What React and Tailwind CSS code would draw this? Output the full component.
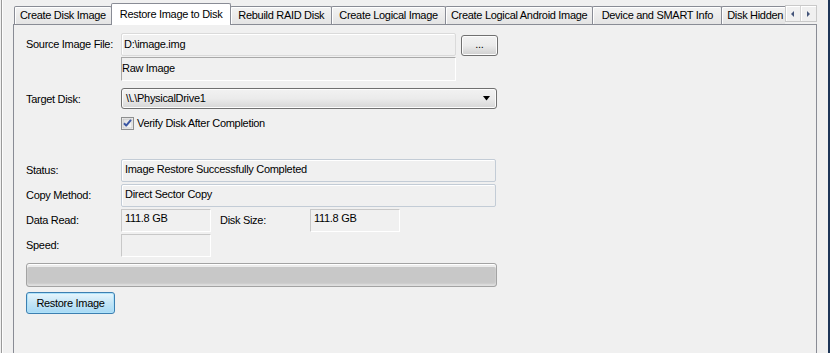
import React from 'react';

const tabs = [
  { label: 'Create Disk Image', w: 'w-[98px]' },
  { label: 'Restore Image to Disk', w: 'w-[121px]', active: true },
  { label: 'Rebuild RAID Disk', w: 'w-[102px]' },
  { label: 'Create Logical Image', w: 'w-[115px]' },
  { label: 'Create Logical Android Image', w: 'w-[149px]' },
  { label: 'Device and SMART Info', w: 'w-[130px]' },
];

function Tab({ label, w, active }) {
  if (active) {
    return (
      <div className={`${w} -ml-[1px] relative z-10 h-[22px] -mb-[1px] flex items-start justify-center pt-[4px] border border-b-0 border-[#898c95] rounded-t-[2px] bg-white whitespace-nowrap`}>
        {label}
      </div>
    );
  }
  return (
    <div className={`${w} -ml-[1px] first:ml-0 h-[18px] flex items-center justify-center border border-b-0 border-[#898c95] rounded-t-[2px] bg-gradient-to-b from-[#f3f3f3] to-[#e4e4e4] shadow-[inset_1px_1px_0_#ffffff] whitespace-nowrap`}>
      {label}
    </div>
  );
}

function Label({ children, className = '' }) {
  return <div className={`w-[95px] shrink-0 pt-[5px] ${className}`}>{children}</div>;
}

function InfoBox({ children, className = '' }) {
  return (
    <div className={`h-[23px] border border-[#c3ccd6] rounded-[2px] shadow-[inset_1px_1px_0_#ffffff] px-[3px] pt-[3px] whitespace-nowrap ${className}`}>
      {children}
    </div>
  );
}

function SunkenBox({ children, className = '' }) {
  return (
    <div className={`h-[23px] border border-t-[#c8c8c8] border-l-[#c8c8c8] border-r-white border-b-white px-[3px] pt-[2px] whitespace-nowrap ${className}`}>
      {children}
    </div>
  );
}

function Checkbox() {
  return (
    <svg width="13" height="13" viewBox="0 0 13 13" className="shrink-0">
      <defs>
        <linearGradient id="cb" x1="0" y1="0" x2="1" y2="1">
          <stop offset="0" stopColor="#dcdcdc" />
          <stop offset="1" stopColor="#fbfbfb" />
        </linearGradient>
      </defs>
      <rect x="0.5" y="0.5" width="12" height="12" fill="#f4f4f4" stroke="#8e8f8f" />
      <rect x="2" y="2" width="9" height="9" fill="url(#cb)" stroke="#b8b8b8" strokeWidth="0.6" />
      <path d="M3 6.2 L5.2 8.6 L10 2.8" fill="none" stroke="#3b57a3" strokeWidth="2" strokeLinejoin="round" />
    </svg>
  );
}

export default function App() {
  return (
    <div className="w-[830px] h-[353px] overflow-hidden bg-[#f0f0f0] flex font-['Liberation_Sans',Arial,sans-serif] text-[11px] tracking-[-0.3px] text-black leading-[13px]">
      {/* left window edge */}
      <div className="w-[13px] shrink-0 pl-[1px]">
        <div className="h-full w-[2px] border-l border-[#9a9a9a] border-r border-r-[#fdfdfd]" />
      </div>

      {/* tab control */}
      <div className="w-[804px] shrink-0 flex flex-col">
        <div className="h-[24px] flex items-end pl-[1px]">
          {tabs.map((t) => (
            <Tab key={t.label} {...t} />
          ))}
          <div className="w-[64px] -ml-[1px] h-[18px] flex items-center pl-[5px] border border-b-0 border-r-0 border-[#898c95] rounded-tl-[2px] bg-gradient-to-b from-[#f3f3f3] to-[#e4e4e4] shadow-[inset_1px_1px_0_#ffffff] whitespace-nowrap overflow-hidden">
            Disk Hidden Areas
          </div>
          <div className="self-start mt-[5px] flex h-[17px] border border-[#c9c9c9] bg-[#f0f0f0]">
            <div className="w-[15px] flex items-center justify-center border-r border-[#d4d4d4] shadow-[inset_1px_1px_0_#ffffff]">
              <div className="w-0 h-0 border-y-[3px] border-y-transparent border-r-[3px] border-r-[#44557a]" />
            </div>
            <div className="w-[15px] flex items-center justify-center shadow-[inset_1px_1px_0_#ffffff]">
              <div className="w-0 h-0 border-y-[3px] border-y-transparent border-l-[3px] border-l-[#44557a]" />
            </div>
          </div>
        </div>

        <div className="flex-1 border border-b-0 border-[#898c95] bg-[#f0f0f0] pl-[12px] pt-[8px]">
          {/* source image */}
          <div className="flex">
            <Label>Source Image File:</Label>
            <div className="flex flex-col gap-[1px]">
              <div className="w-[335px] h-[23px] border border-[#dadada] rounded-[2px] shadow-[inset_1px_1px_0_#ffffff] px-[2px] pt-[4px]">
                D:\image.img
              </div>
              <div className="w-[335px] h-[24px] border border-t-[#a8a8a8] border-l-[#a8a8a8] border-r-white border-b-white pt-[4px]">
                Raw Image
              </div>
            </div>
            <button className="ml-[5px] mt-[2px] w-[37px] h-[21px] border border-[#707070] rounded-[3px] bg-gradient-to-b from-[#f2f2f2] via-[#ebebeb] to-[#cfcfcf] shadow-[inset_0_0_0_1px_#fcfcfc] flex items-center justify-center text-[11px] leading-none pb-[2px]">
              ...
            </button>
          </div>

          {/* target disk */}
          <div className="flex mt-[7px]">
            <Label className="pt-[4px]">Target Disk:</Label>
            <div className="w-[376px] h-[21px] border border-[#707070] rounded-[3px] bg-gradient-to-b from-[#f2f2f2] via-[#ebebeb] to-[#d6d6d6] shadow-[inset_0_0_0_1px_#fcfcfc] flex items-center justify-between pl-[4px] pr-[4px]">
              <span>\\.\PhysicalDrive1</span>
              <svg width="8" height="5" viewBox="0 0 8 5" className="mr-[1px]">
                <path d="M0 0 H7 L3.5 4.5 Z" fill="#000000" />
              </svg>
            </div>
          </div>

          <div className="flex items-center gap-[3px] ml-[95px] mt-[8px]">
            <Checkbox />
            <span>Verify Disk After Completion</span>
          </div>

          {/* status */}
          <div className="flex flex-col gap-[2px] mt-[29px]">
            <div className="flex">
              <Label>Status:</Label>
              <InfoBox className="w-[375px]">Image Restore Successfully Completed</InfoBox>
            </div>
            <div className="flex">
              <Label>Copy Method:</Label>
              <InfoBox className="w-[375px] border-[#b4cde6]">Direct Sector Copy</InfoBox>
            </div>
            <div className="flex">
              <Label>Data Read:</Label>
              <SunkenBox className="w-[90px]">111.8 GB</SunkenBox>
              <div className="w-[99px] shrink-0 pl-[9px] pt-[5px]">Disk Size:</div>
              <SunkenBox className="w-[90px]">111.8 GB</SunkenBox>
            </div>
            <div className="flex">
              <Label>Speed:</Label>
              <SunkenBox className="w-[90px]" />
            </div>
          </div>

          {/* progress */}
          <div className="mt-[6px] w-[471px] h-[24px] border border-[#a3a3a3] rounded-[3px] bg-[#c8c8c8] shadow-[inset_0_1px_0_#ffffff,inset_0_3px_0_#ececec,inset_0_-2px_2px_#e0e0e0]" />

          <button className="mt-[5px] w-[89px] h-[22px] border border-[#3c7fb1] rounded-[3px] bg-gradient-to-b from-[#e8f6fd] via-[#c4e5f6] to-[#a7d9f5] shadow-[inset_0_0_0_1px_#aee2fa] flex items-center justify-center tracking-[-0.3px]">
            Restore Image
          </button>
        </div>
      </div>

      {/* right window edge */}
      <div className="flex-1 flex justify-end">
        <div className="w-[2px] h-full bg-[#1d3557]" />
      </div>
    </div>
  );
}
